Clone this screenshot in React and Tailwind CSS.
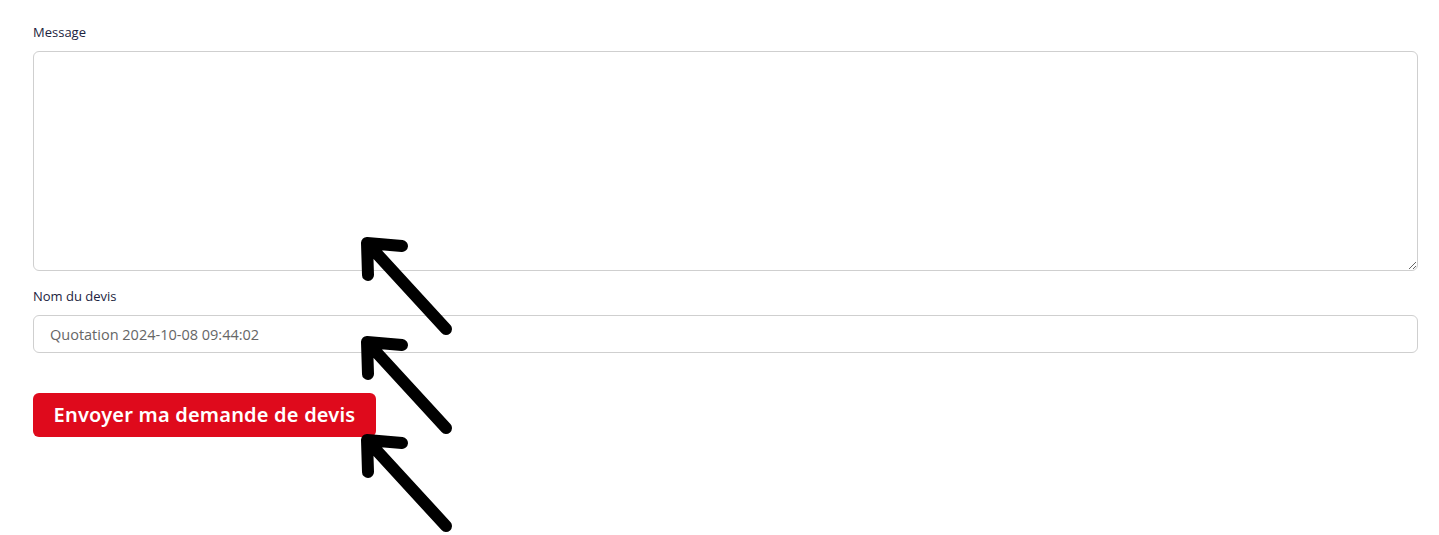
import { useState } from 'react'

const labelClass = 'mb-[11px] block text-[13px] font-medium leading-[16px] text-[#1c2340]'
const fieldClass =
  'rounded-[6px] border border-[#cfcfcf] bg-white px-4 text-[14.5px] text-[#666] outline-none'

// hand-drawn annotation arrow, tip at top-left
function Arrow({ className }) {
  return (
    <svg className={className} width="100" height="105" viewBox="0 0 100 105" fill="none">
      <path
        d="M7 6 L86 92 M7 6 L42 9 M7 6 L8 38"
        stroke="#000"
        strokeWidth="12"
        strokeLinecap="round"
        strokeLinejoin="round"
      />
    </svg>
  )
}

export default function App() {
  const [message, setMessage] = useState('')
  const [name, setName] = useState('Quotation 2024-10-08 09:44:02')

  return (
    <div className="relative h-[535px] w-full bg-white px-[33px] pt-[24px]" style={{ fontFamily: '"Open Sans", "Liberation Sans", sans-serif' }}>
      <label className={labelClass}>Message</label>
      <textarea
        value={message}
        onChange={(e) => setMessage(e.target.value)}
        className={`${fieldClass} block h-[220px] w-[1385px] py-2`}
      />

      <label className={`${labelClass} mt-[17px]`}>Nom du devis</label>
      <input
        value={name}
        onChange={(e) => setName(e.target.value)}
        className={`${fieldClass} block h-[38px] w-[1385px]`}
      />

      <button className="mt-[40px] flex h-[44px] w-[343px] items-center justify-center rounded-[6px] bg-[#df0a1c] text-[20px] font-semibold tracking-[0.2px] text-white" style={{ fontFamily: '"Noto Sans", "Open Sans", sans-serif' }}>
        Envoyer ma demande de devis
      </button>

      <Arrow className="absolute left-[360px] top-[237px]" />
      <Arrow className="absolute left-[360px] top-[336px]" />
      <Arrow className="absolute left-[360px] top-[434px]" />
    </div>
  )
}
